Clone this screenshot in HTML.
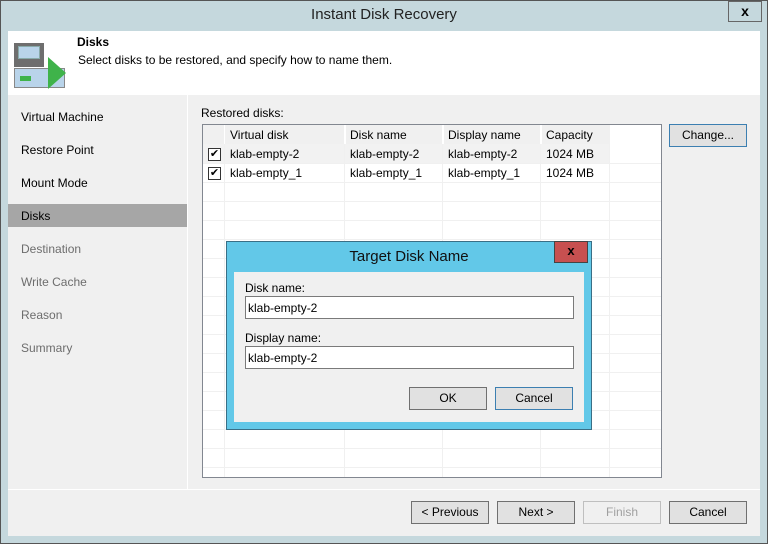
<!DOCTYPE html>
<html><head><style>
*{margin:0;padding:0;box-sizing:border-box}
body{width:768px;height:544px;position:relative;font-family:"Liberation Sans",sans-serif;font-size:12px;color:#000;background:#c5d8dd;overflow:hidden}
.a{position:absolute}
.btn{position:absolute;background:#e1e1e1;border:1px solid #adadad;text-align:center;line-height:20px;font-size:12px}
.nav{position:absolute;left:21px;font-size:12px}
.grid{position:absolute;left:202px;top:124px;width:460px;height:354px;background:#fff;border:1px solid #828790;overflow:hidden}
.vl{position:absolute;top:0;bottom:0;width:1px;background:#f0f0f0}
.hl{position:absolute;left:0;right:0;height:1px;background:#f0f0f0}
.cell{position:absolute;font-size:12px}
.cb{position:absolute;left:5px;width:13px;height:13px;border:1px solid #333;background:#fff;font-size:11px;line-height:11px;text-align:center}
</style></head><body>
<div class="a" style="left:0;top:0;width:768px;height:544px;border:1px solid #555"></div>
<div class="a" style="left:0;top:6px;width:768px;text-align:center;font-size:15px;color:#222">Instant Disk Recovery</div>
<div class="a" style="left:728px;top:1px;width:34px;height:21px;border:1px solid #666;text-align:center;font-weight:bold;font-size:14px;line-height:18px">x</div>
<div class="a" style="left:8px;top:31px;width:752px;height:505px;background:#f0f0f0"></div>
<div class="a" style="left:8px;top:31px;width:752px;height:64px;background:#fff"></div>
<div class="a" style="left:14px;top:43px;width:30px;height:24px;background:#6e6e6e"></div>
<div class="a" style="left:18px;top:46px;width:22px;height:13px;background:#b9d4ea;border:1px solid #8aa"></div>
<div class="a" style="left:14px;top:68px;width:51px;height:20px;background:#b9d4ea;border:1px solid #888"></div>
<div class="a" style="left:20px;top:76px;width:11px;height:5px;background:#3fb34a"></div>
<svg class="a" style="left:48px;top:57px" width="18" height="32"><polygon points="0,0 18,16 0,32" fill="#3fb34a"/></svg>
<div class="a" style="left:77px;top:35px;font-weight:bold">Disks</div>
<div class="a" style="left:78px;top:53px">Select disks to be restored, and specify how to name them.</div>
<div class="a" style="left:187px;top:95px;width:1px;height:395px;background:#fff"></div>
<div class="a" style="left:8px;top:204px;width:179px;height:23px;background:#a6a6a6"></div>
<div class="nav" style="top:110px">Virtual Machine</div>
<div class="nav" style="top:143px">Restore Point</div>
<div class="nav" style="top:176px">Mount Mode</div>
<div class="nav" style="top:209px">Disks</div>
<div class="nav" style="top:242px;color:#6d6d6d">Destination</div>
<div class="nav" style="top:275px;color:#6d6d6d">Write Cache</div>
<div class="nav" style="top:308px;color:#6d6d6d">Reason</div>
<div class="nav" style="top:341px;color:#6d6d6d">Summary</div>
<div class="a" style="left:201px;top:106px">Restored disks:</div>
<div class="grid">
 <div class="a" style="left:0;top:0;width:407px;height:19px;background:#f0f0f0"></div>
 <div class="a" style="left:0;top:19px;width:407px;height:19px;background:#f2f2f2"></div>
 <div class="vl" style="left:21px"></div><div class="vl" style="left:141px"></div><div class="vl" style="left:239px"></div><div class="vl" style="left:337px"></div><div class="vl" style="left:406px"></div>
 <div class="a" style="left:21px;top:0;width:1px;height:19px;background:#fff"></div><div class="a" style="left:141px;top:0;width:2px;height:19px;background:#fff"></div><div class="a" style="left:239px;top:0;width:2px;height:19px;background:#fff"></div><div class="a" style="left:337px;top:0;width:2px;height:19px;background:#fff"></div>
 <div class="hl" style="top:57px"></div><div class="hl" style="top:76px"></div><div class="hl" style="top:95px"></div><div class="hl" style="top:114px"></div><div class="hl" style="top:133px"></div><div class="hl" style="top:152px"></div><div class="hl" style="top:171px"></div><div class="hl" style="top:190px"></div><div class="hl" style="top:209px"></div><div class="hl" style="top:228px"></div><div class="hl" style="top:247px"></div><div class="hl" style="top:266px"></div><div class="hl" style="top:285px"></div><div class="hl" style="top:304px"></div><div class="hl" style="top:323px"></div><div class="hl" style="top:342px"></div>
 <div class="hl" style="top:38px"></div>
 <div class="cell" style="left:27px;top:3px">Virtual disk</div><div class="cell" style="left:147px;top:3px">Disk name</div><div class="cell" style="left:245px;top:3px">Display name</div><div class="cell" style="left:343px;top:3px">Capacity</div>
 <div class="cb" style="top:23px">✔</div><div class="cb" style="top:42px">✔</div>
 <div class="cell" style="left:27px;top:22px">klab-empty-2</div><div class="cell" style="left:147px;top:22px">klab-empty-2</div><div class="cell" style="left:245px;top:22px">klab-empty-2</div><div class="cell" style="left:343px;top:22px">1024 MB</div>
 <div class="cell" style="left:27px;top:41px">klab-empty_1</div><div class="cell" style="left:147px;top:41px">klab-empty_1</div><div class="cell" style="left:245px;top:41px">klab-empty_1</div><div class="cell" style="left:343px;top:41px">1024 MB</div>
</div>
<div class="btn" style="left:669px;top:124px;width:78px;height:23px;border-color:#3c7fb1">Change...</div>
<div class="a" style="left:8px;top:489px;width:752px;height:1px;background:#fff"></div>
<div class="btn" style="left:411px;top:501px;width:78px;height:23px;border-color:#707070">&lt; Previous</div>
<div class="btn" style="left:497px;top:501px;width:78px;height:23px;border-color:#707070">Next &gt;</div>
<div class="btn" style="left:583px;top:501px;width:78px;height:23px;background:#f0f0f0;border-color:#bfbfbf;color:#a0a0a0">Finish</div>
<div class="btn" style="left:669px;top:501px;width:78px;height:23px;border-color:#707070">Cancel</div>
<div class="a" style="left:226px;top:241px;width:366px;height:189px;background:#62c8e8;border:1px solid #3a6f86"></div>
<div class="a" style="left:226px;top:248px;width:366px;text-align:center;font-size:15px;color:#111">Target Disk Name</div>
<div class="a" style="left:554px;top:241px;width:34px;height:22px;background:#c75050;border:1px solid #444;text-align:center;font-weight:bold;font-size:13px;line-height:18px">x</div>
<div class="a" style="left:234px;top:272px;width:350px;height:150px;background:#f0f0f0"></div>
<div class="a" style="left:245px;top:281px">Disk name:</div>
<div class="a" style="left:245px;top:296px;width:329px;height:23px;background:#fff;border:1px solid #7a7a7a;padding:4px 2px">klab-empty-2</div>
<div class="a" style="left:245px;top:331px">Display name:</div>
<div class="a" style="left:245px;top:346px;width:329px;height:23px;background:#fff;border:1px solid #7a7a7a;padding:4px 2px">klab-empty-2</div>
<div class="btn" style="left:409px;top:387px;width:78px;height:23px;border-color:#707070">OK</div>
<div class="btn" style="left:495px;top:387px;width:78px;height:23px;border-color:#3c7fb1">Cancel</div>
</body></html>
